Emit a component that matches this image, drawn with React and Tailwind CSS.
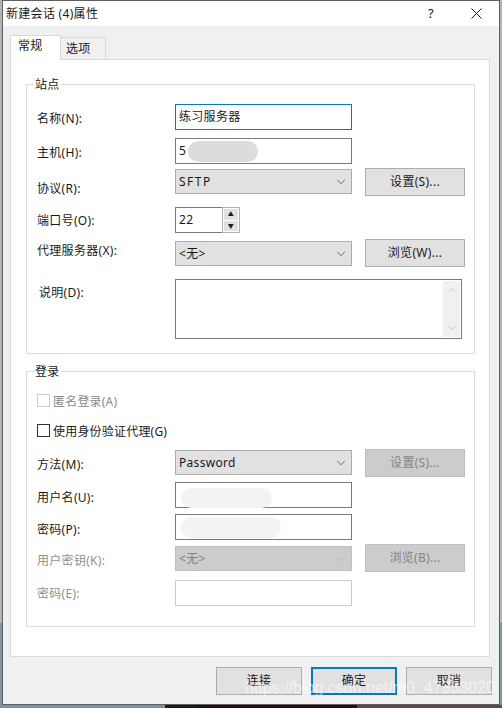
import { ChevronDown, ChevronUp } from 'lucide-react'

const fontFamily = 'font-["Noto_Sans","Noto_Sans_CJK_SC",sans-serif]'

function Button({ children, disabled, primary, className = '' }) {
  let look = 'border border-[#adadad] bg-[#e1e1e1] text-[#1a1a1a]'
  if (disabled) look = 'border border-[#bfbfbf] bg-[#cccccc] text-[#838383]'
  if (primary) look = 'border-2 border-[#0078d7] bg-[#e1e1e1] text-[#1a1a1a]'
  return (
    <div className={`flex h-[28px] shrink-0 items-center justify-center text-[12px] ${look} ${className}`}>
      {children}
    </div>
  )
}

function Field({ value, active, disabled, blob }) {
  let border = 'border-[#7a7a7a]'
  if (active) border = 'border-[#0078d7]'
  if (disabled) border = 'border-[#cccccc]'
  return (
    <div className={`relative flex h-[26px] w-[177px] shrink-0 items-center border bg-white pl-[3px] text-[12px] text-[#1a1a1a] ${border}`}>
      {value}
      {blob}
    </div>
  )
}

function Select({ value, disabled, spaced }) {
  const look = disabled
    ? 'border-[#bfbfbf] bg-[#cccccc] text-[#838383]'
    : 'border-[#adadad] bg-[#e1e1e1] text-[#1a1a1a]'
  return (
    <div className={`flex h-[25px] w-[177px] shrink-0 items-center justify-between border pl-[3px] pr-[3px] text-[12px] ${look}`}>
      <span className={spaced ? 'tracking-[1.5px]' : ''}>{value}</span>
      <ChevronDown size={14} strokeWidth={1.2} className={disabled ? 'text-[#a8a8a8]' : 'text-[#333333]'} />
    </div>
  )
}

function Label({ children, disabled, className = '' }) {
  return (
    <div className={`w-[138px] shrink-0 text-[12px] leading-[16px] ${disabled ? 'text-[#8f8f8f]' : 'text-[#1a1a1a]'} ${className}`}>
      {children}
    </div>
  )
}

function Check({ label, disabled, className = '' }) {
  return (
    <div className={`flex h-[13px] items-center gap-[3px] text-[12px] ${disabled ? 'text-[#8a8a8a]' : 'text-[#1a1a1a]'} ${className}`}>
      <span className={`size-[13px] border bg-white ${disabled ? 'border-[#cccccc]' : 'border-[#333333]'}`} />
      <span className="pt-[2px] tracking-[0.2px]">{label}</span>
    </div>
  )
}

function Group({ title, className = '', children }) {
  return (
    <div className={`relative ml-[15px] mr-[14px] border border-[#dcdcdc] pl-[10px] ${className}`}>
      <span className="absolute left-[7px] top-[-8px] bg-white px-[1px] text-[12px] leading-[16px] text-[#1a1a1a]">
        {title}
      </span>
      {children}
    </div>
  )
}

export default function App() {
  return (
    <div className={`relative h-[708px] w-[502px] overflow-hidden bg-[linear-gradient(to_bottom,#b4b4b4_88%,#7f94a3_88%)] pl-[2px] tracking-[0.3px] ${fontFamily}`}>
      <div className="flex h-[705px] w-[498px] flex-col border border-[#5f5f5f] bg-[#f0f0f0]">
        {/* title bar */}
        <div className="flex h-[25px] shrink-0 items-center bg-white pl-[3px] pr-[17px] text-[12px] text-[#1a1a1a]">
          <span>新建会话 (4)属性</span>
          <span className="ml-auto mr-[37px] text-[13px]">?</span>
          <svg width="11" height="11" viewBox="0 0 11 11" className="text-[#1a1a1a]">
            <path d="M0.5 0.5 L10.5 10.5 M10.5 0.5 L0.5 10.5" stroke="currentColor" strokeWidth="1" fill="none" />
          </svg>
        </div>

        {/* tabs */}
        <div className="mt-[9px] flex h-[24px] items-end pl-[7px] text-[12px] text-[#1a1a1a]">
          <div className="relative z-10 mb-[-1px] h-[25px] w-[51px] border border-b-0 border-[#d9d9d9] bg-white pl-[7px] pt-[1px]">
            常规
          </div>
          <div className="flex h-[22px] w-[45px] items-center border border-b-0 border-l-0 border-[#d9d9d9] pl-[5px]">
            选项
          </div>
        </div>

        {/* panel */}
        <div className="ml-[7px] h-[598px] w-[480px] border border-[#d9d9d9] bg-white pt-[24px]">
          <Group title="站点" className="h-[270px] pt-[19px]">
            <div className="flex">
              <Label className="pt-[7px]">名称(N):</Label>
              <Field value="练习服务器" active />
            </div>
            <div className="mt-[8px] flex">
              <Label className="pt-[7px]">主机(H):</Label>
              <Field
                value="5"
                blob={<span className="absolute left-[12px] top-[2px] h-[21px] w-[70px] rounded-full bg-[#dcdcdc]" />}
              />
            </div>
            <div className="mt-[4px] flex">
              <Label className="pt-[13px]">协议(R):</Label>
              <div className="mt-[1px]">
                <Select value="SFTP" spaced />
              </div>
              <Button className="ml-[13px] w-[100px]">设置(S)...</Button>
            </div>
            <div className="mt-[10px] flex">
              <Label className="pt-[6px]">端口号(O):</Label>
              <div className="flex h-[26px] w-[47px] items-center border border-r-0 border-[#7a7a7a] pl-[3px] text-[12px] tracking-[0.5px] text-[#1a1a1a]">
                22
              </div>
              <div className="flex h-[26px] w-[18px] flex-col gap-[1px] border border-[#b0b0b0] p-[1px]">
                <div className="flex flex-1 items-center justify-center bg-[#e1e1e1] text-[6px] leading-none text-[#1a1a1a]">▲</div>
                <div className="flex flex-1 items-center justify-center bg-[#e1e1e1] text-[6px] leading-none text-[#1a1a1a]">▼</div>
              </div>
            </div>
            <div className="mt-[6px] flex">
              <Label className="pt-[4px]">代理服务器(X):</Label>
              <div className="mt-[2px]">
                <Select value="<无>" />
              </div>
              <Button className="ml-[13px] w-[100px]">浏览(W)...</Button>
            </div>
            <div className="mt-[12px] flex">
              <Label className="pl-[2px] pt-[6px]">说明(D):</Label>
              <div className="flex h-[60px] w-[287px] justify-end border border-[#7a7a7a] bg-white p-[1px]">
                <div className="flex w-[17px] flex-col items-center justify-between bg-[#f0f0f0] py-[3px] text-[#c4c4c4]">
                  <ChevronUp size={12} strokeWidth={2} />
                  <ChevronDown size={12} strokeWidth={2} />
                </div>
              </div>
            </div>
          </Group>

          <Group title="登录" className="mt-[17px] h-[256px] pt-[22px]">
            <Check label="匿名登录(A)" disabled />
            <Check label="使用身份验证代理(G)" className="mt-[17px]" />
            <div className="mt-[12px] flex">
              <Label className="pt-[8px]">方法(M):</Label>
              <div className="mt-[1px]">
                <Select value="Password" />
              </div>
              <Button disabled className="ml-[13px] w-[100px]">设置(S)...</Button>
            </div>
            <div className="mt-[5px] flex">
              <Label className="pt-[8px]">用户名(U):</Label>
              <Field blob={<span className="absolute bottom-[-1px] left-[5px] h-[20px] w-[91px] rounded-full bg-[#f3f3f3]" />} />
            </div>
            <div className="mt-[6px] flex">
              <Label className="pt-[8px]">密码(P):</Label>
              <Field blob={<span className="absolute left-[5px] top-[2px] h-[21px] w-[100px] rounded-full bg-[#f3f3f3]" />} />
            </div>
            <div className="mt-[4px] flex">
              <Label disabled className="pt-[9px]">用户密钥(K):</Label>
              <div className="mt-[2px]">
                <Select value="<无>" disabled />
              </div>
              <Button disabled className="ml-[13px] w-[100px]">浏览(B)...</Button>
            </div>
            <div className="mt-[8px] flex">
              <Label disabled className="pt-[6px]">密码(E):</Label>
              <Field disabled />
            </div>
          </Group>
        </div>

        {/* footer buttons */}
        <div className="mt-[10px] flex justify-end gap-[9px] pr-[7px]">
          <Button className="w-[86px]">连接</Button>
          <Button primary className="w-[86px]">确定</Button>
          <Button className="w-[86px]">取消</Button>
        </div>
      </div>

      {/* whatever sits behind the dialog, along the bottom edge */}
      <div className="ml-[-2px] flex h-[3px]">
        <div className="w-[165px] bg-[#7f94a3]" />
        <div className="w-[32px] bg-[#1c1c1c]" />
        <div className="w-[160px] bg-[#2a0c0c]" />
        <div className="flex-1 bg-[#5a4a48]" />
      </div>

      <span className='absolute left-[245px] top-[679px] font-["Liberation_Sans",sans-serif] text-[16px] leading-[18px] tracking-normal text-white/55'>
        https://blog.csdn.net/m0_47333020
      </span>
    </div>
  )
}
